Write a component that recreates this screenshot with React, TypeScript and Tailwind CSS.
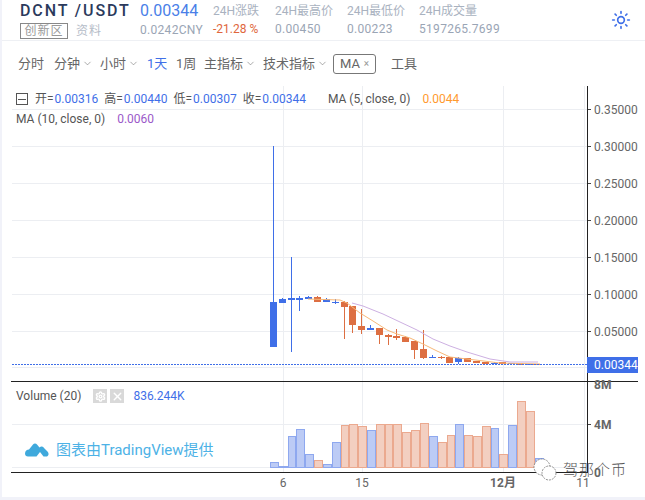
import React from 'react';
import { Sun, ChevronDown, Settings, X } from 'lucide-react';

const BLUE = '#3f6fe8';
const RED = '#dd6f42';

// x, width, wick top, body top, body bottom, wick bottom, up
const candles: [number, number, number, number, number, boolean][] = [
  [270, 145, 301, 346, 346, true],
  [279, 297, 298, 302, 302, true],
  [288, 256, 297, 299, 351, true],
  [296, 295, 297, 299, 310, true],
  [305, 295, 296, 298, 298, true],
  [314, 295, 296, 301, 301, false],
  [323, 297, 298, 301, 301, true],
  [332, 298, 301, 302, 303, true],
  [341, 300, 301, 306, 338, false],
  [349, 305, 305, 324, 332, false],
  [358, 308, 325, 329, 333, false],
  [367, 324, 327, 329, 329, true],
  [376, 327, 327, 334, 343, false],
  [385, 333, 334, 336, 344, false],
  [393, 328, 335, 337, 339, false],
  [402, 335, 336, 341, 341, false],
  [411, 340, 340, 349, 358, false],
  [420, 329, 348, 357, 358, false],
  [429, 354, 356, 357, 357, true],
  [438, 355, 356, 357, 358, false],
  [446, 356, 356, 362, 362, false],
  [455, 356, 357, 361, 363, true],
  [464, 357, 357, 361, 361, false],
  [473, 360, 360, 362, 362, false],
  [482, 361, 361, 363, 363, false],
  [491, 361, 362, 363, 363, true],
  [499, 361, 361, 363, 363, false],
  [508, 362, 362, 363, 363, true],
  [516, 362, 362, 364, 364, false],
  [525, 363, 363, 364, 364, true],
  [533, 363, 363, 364, 364, false],
];

// left, right, top, up
const volumes: [number, number, number, boolean][] = [
  [270, 279, 461, true], [279, 288, 465, true], [288, 296, 435, true], [296, 305, 428, true],
  [305, 314, 453, true], [314, 323, 459, false], [323, 332, 463, true], [332, 341, 441, true],
  [341, 349, 424, false], [349, 358, 423, false], [358, 367, 425, false], [367, 376, 429, true],
  [376, 385, 423, false], [385, 393, 423, false], [393, 402, 423, false], [402, 411, 431, false],
  [411, 420, 429, false], [420, 429, 422, false], [429, 438, 435, true], [438, 447, 441, false],
  [447, 455, 434, false], [455, 464, 423, true], [464, 473, 434, false], [473, 482, 435, false],
  [482, 491, 425, false], [491, 499, 427, true], [499, 508, 453, false], [508, 517, 424, true],
  [517, 526, 400, false], [526, 535, 410, false], [535, 544, 457, true],
];

const priceTicks = [
  ['0.35000', 108], ['0.30000', 145], ['0.25000', 182], ['0.20000', 219], ['0.15000', 256], ['0.10000', 293], ['0.05000', 330],
] as const;

const ma5 = 'M308 298 L340 299 L347 302 L360 312 L373 320 L387 329 L397 333 L410 337 L423 343 L437 350 L450 356 L467 358 L500 362 L540 363';
const ma10 = 'M352 302 L363 305 L383 313 L400 321 L417 329 L433 338 L450 345 L467 351 L490 358 L510 361 L538 361';

function Chart() {
  return (
    <svg viewBox="2 85 643 412" className="block w-[643px] h-[412px]">
      {[108, 145, 182, 219, 256, 293, 330, 366, 423, 466].map((y) => (
        <line key={y} x1={12} x2={587} y1={y + 0.5} y2={y + 0.5} stroke="#eceef2" />
      ))}
      {[283, 362, 503, 584].map((x) => (
        <line key={x} x1={x + 0.5} x2={x + 0.5} y1={85} y2={471} stroke="#eceef2" />
      ))}

      {volumes.map(([l, r, t, up]) => (
        <rect
          key={l}
          x={l + 0.5}
          y={t + 0.5}
          width={r - l - 1}
          height={466 - t}
          fill={up ? '#bccbf5' : '#f3cfc1'}
          stroke={up ? '#8ea8ef' : '#eba98f'}
        />
      ))}

      {candles.map(([x, wt, bt, bb, wb, up]) => {
        const c = up ? BLUE : RED;
        return (
          <g key={x} fill={c}>
            <rect x={x + 3} y={wt} width={1} height={wb - wt} />
            <rect x={x} y={bt} width={7} height={Math.max(bb - bt, 1)} />
          </g>
        );
      })}
      <path d={ma5} fill="none" stroke="#f8b878" strokeWidth={1} />
      <path d={ma10} fill="none" stroke="#cdb0e2" strokeWidth={1} />
      <line x1={12} x2={587} y1={363.5} y2={363.5} stroke={BLUE} strokeDasharray="2 1" />

      <line x1={11} x2={638} y1={380.5} y2={380.5} stroke="#222" />
      <line x1={11} x2={587} y1={471.5} y2={471.5} stroke="#222" />
      <line x1={587.5} x2={587.5} y1={85} y2={472} stroke="#222" />

      <g fontSize={12} fill="#666">
        {priceTicks.map(([t, y]) => (
          <g key={t}>
            <line x1={588} x2={591} y1={y + 0.5} y2={y + 0.5} stroke="#444" />
            <text x={594} y={y + 4.5}>{t}</text>
          </g>
        ))}
        <line x1={588} x2={591} y1={423.5} y2={423.5} stroke="#444" />
        <text x={594} y={428} fontWeight={700}>4M</text>
        <text x={594} y={476} fontWeight={700}>0</text>
        <text x={283} y={486} textAnchor="middle">6</text>
        <text x={362} y={486} textAnchor="middle">15</text>
        <text x={503} y={486} textAnchor="middle" fontWeight={700}>12月</text>
        <text x={583} y={486} textAnchor="middle">11</text>
      </g>

      <text x={594} y={388} fontSize={12} fontWeight={700} fill="#666">8M</text>
      <rect x={588} y={381} width={50} height={0} fill="#fff" />
      <rect x={587} y={356} width={51} height={16} fill={BLUE} />
      <text x={594} y={368} fontSize={12} fill="#fff">0.00344</text>
    </svg>
  );
}

function Toolbar() {
  const chev = <ChevronDown className="w-[11px] h-[11px] ml-[2px]" strokeWidth={1.2} />;
  return (
    <div className="flex items-center h-[45px] pl-4 text-[13px] text-[#666] border-b-0">
      <span className="w-[36px]">分时</span>
      <span className="flex items-center w-[46px]">分钟{chev}</span>
      <span className="flex items-center w-[47px]">小时{chev}</span>
      <span className="w-[29px] text-[#3f6fe8]">1天</span>
      <span className="w-[28px]">1周</span>
      <span className="flex items-center w-[59px]">主指标{chev}</span>
      <span className="flex items-center w-[70px]">技术指标{chev}</span>
      <span className="flex items-center justify-between w-[43px] h-[20px] px-[6px] border border-[#777] rounded-[3px]">
        MA<span className="text-[10px] text-[#999]">×</span>
      </span>
      <span className="ml-[15px]">工具</span>
    </div>
  );
}

function Header() {
  const label = 'text-[12px] text-[#a9b2c0] leading-[18px]';
  const value = 'text-[12px] text-[#9aa5b5] leading-[18px] tracking-[0.3px]';
  return (
    <div className="flex items-center h-[41px] border-b border-[#eef0f4] pl-[18px] pr-[14px]">
      <div className="flex flex-col w-[120px]">
        <span className="text-[16px] leading-[20px] font-medium tracking-[1.9px] text-[#2b3a5c]">DCNT /USDT</span>
        <div className="flex items-center mt-[1px]">
          <span className="flex items-center justify-center w-[48px] h-[16px] border border-[#888] text-[12px] text-[#999] tracking-[1px]">创新区</span>
          <span className="ml-2 text-[12px] text-[#b5bcc8] tracking-[1px]">资料</span>
        </div>
      </div>
      <div className="flex flex-col w-[73px]">
        <span className="text-[16px] leading-[20px] text-[#4a7fe8]">0.00344</span>
        <span className={value}>0.0242CNY</span>
      </div>
      <div className="flex flex-col w-[62px]">
        <span className={label}>24H涨跌</span>
        <span className="text-[12px] leading-[18px] text-[#e0663c]">-21.28 %</span>
      </div>
      <div className="flex flex-col w-[72px]">
        <span className={label}>24H最高价</span>
        <span className={value}>0.00450</span>
      </div>
      <div className="flex flex-col w-[72px]">
        <span className={label}>24H最低价</span>
        <span className={value}>0.00223</span>
      </div>
      <div className="flex flex-col">
        <span className={label}>24H成交量</span>
        <span className={value}>5197265.7699</span>
      </div>
      <Sun className="ml-auto w-[20px] h-[20px] text-[#3f6fe8]" strokeWidth={2} />
    </div>
  );
}

export default function App() {
  return (
    <div className="w-[645px] h-[500px] overflow-hidden bg-[#f1f2f9] pl-[2px] pb-[3px] font-['Roboto','Noto_Sans_CJK_SC',sans-serif]">
      <div className="bg-white h-full">
        <Header />
        <Toolbar />
        <div className="relative">
          <Chart />

          {/* legend */}
          <div className="absolute left-[14px] top-[5px] flex items-center h-[16px] text-[12px] text-[#555]">
            <span className="flex items-center justify-center w-[12px] h-[12px] border border-[#555] mr-[7px]">
              <span className="w-[8px] h-px bg-[#555]" />
            </span>
            <span>开=</span><span className="text-[#3f6fe8] ml-[1px] mr-[6px]">0.00316</span>
            <span>高=</span><span className="text-[#3f6fe8] ml-[1px] mr-[6px]">0.00440</span>
            <span>低=</span><span className="text-[#3f6fe8] ml-[1px] mr-[6px]">0.00307</span>
            <span>收=</span><span className="text-[#3f6fe8] ml-[1px]">0.00344</span>
            <span className="ml-[22px]">MA (5, close, 0)</span>
            <span className="ml-[12px] text-[#ff9a2e]">0.0044</span>
          </div>
          <div className="absolute left-[14px] top-[25px] flex items-center h-[16px] text-[12px] text-[#555]">
            <span>MA (10, close, 0)</span>
            <span className="ml-[12px] text-[#9b59c9]">0.0060</span>
          </div>

          {/* volume legend */}
          <div className="absolute left-[14px] top-[302px] flex items-center h-[16px] text-[12px] text-[#555]">
            <span>Volume (20)</span>
            <span className="flex items-center justify-center w-[14px] h-[14px] ml-[12px] bg-[#d9d9d9]">
              <Settings className="w-[11px] h-[11px] text-white" strokeWidth={3} />
            </span>
            <span className="flex items-center justify-center w-[14px] h-[14px] ml-[3px] bg-[#d9d9d9]">
              <X className="w-[13px] h-[13px] text-white" strokeWidth={2.5} />
            </span>
            <span className="ml-[9px] text-[#3f6fe8]">836.244K</span>
          </div>

          {/* TradingView credit */}
          <div className="absolute left-[23px] top-[353px] flex items-center h-[22px] text-[15px] text-[#4db2e6]">
            <svg viewBox="0 0 24 14" className="w-[24px] h-[14px] mr-[7px]" fill="#3fa9dc">
              <path d="M0 10.5 C0 8 2 6.5 4 6.5 L8 1.5 C9 0.3 11 0.3 12 1.5 L14.5 4.5 C16 3 18 3.5 19 5 L22.5 8.5 C24.5 10.5 23.5 13.5 21 13.5 L18.5 13.5 L15 9 L11.5 13.5 L3 13.5 C1.2 13.5 0 12.2 0 10.5 Z" />
            </svg>
            图表由TradingView提供
          </div>

          {/* watermark */}
          <div className="absolute left-[530px] top-[372px] flex items-center text-[#555]">
            <svg viewBox="0 0 26 24" className="w-[26px] h-[24px]" fill="#fff" stroke="#777" strokeWidth={0.8} strokeDasharray="2 1">
              <circle cx="10" cy="9" r="8" />
              <circle cx="17" cy="15" r="7" />
            </svg>
            <span className="ml-[5px] text-[15px] tracking-[1px] font-light">驾那个币</span>
          </div>
        </div>
      </div>
    </div>
  );
}
